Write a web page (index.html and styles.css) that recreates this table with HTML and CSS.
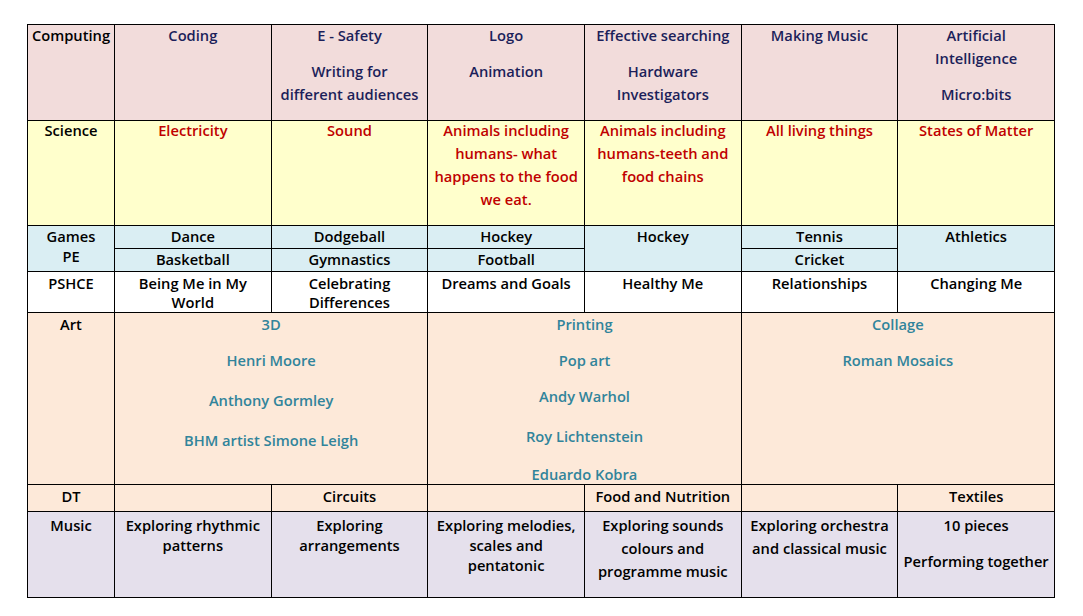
FILE: index.html
```html
<!DOCTYPE html>
<html lang="en">
<head>
<meta charset="utf-8">
<title>Curriculum overview</title>
<link rel="stylesheet" href="styles.css">
</head>
<body>
<table class="plan">
  <colgroup>
    <col class="c-label">
    <col class="c-wide"><col class="c-wide"><col class="c-wide"><col class="c-wide"><col class="c-wide"><col class="c-wide">
  </colgroup>
  <tbody>
    <tr class="r-computing">
      <td class="label"><p>Computing</p></td>
      <td><p>Coding</p></td>
      <td><p>E - Safety</p><p class="gap">Writing for<br>different audiences</p></td>
      <td><p>Logo</p><p class="gap">Animation</p></td>
      <td><p>Effective searching</p><p class="gap">Hardware<br>Investigators</p></td>
      <td><p>Making Music</p></td>
      <td><p>Artificial<br>Intelligence</p><p class="gap">Micro:bits</p></td>
    </tr>
    <tr class="r-science">
      <td class="label"><p>Science</p></td>
      <td><p>Electricity</p></td>
      <td><p>Sound</p></td>
      <td><p>Animals including<br>humans- what<br>happens to the food<br>we eat.</p></td>
      <td><p>Animals including<br>humans-teeth and<br>food chains</p></td>
      <td><p>All living things</p></td>
      <td><p>States of Matter</p></td>
    </tr>
    <tr class="r-games">
      <td class="label" rowspan="2">Games<br>PE</td>
      <td class="split">Dance</td>
      <td class="split">Dodgeball</td>
      <td class="split">Hockey</td>
      <td rowspan="2">Hockey</td>
      <td class="split">Tennis</td>
      <td rowspan="2">Athletics</td>
    </tr>
    <tr class="r-games r-games2">
      <td>Basketball</td>
      <td>Gymnastics</td>
      <td>Football</td>
      <td>Cricket</td>
    </tr>
    <tr class="r-pshce">
      <td class="label">PSHCE</td>
      <td>Being Me in My<br>World</td>
      <td>Celebrating<br>Differences</td>
      <td>Dreams and Goals</td>
      <td>Healthy Me</td>
      <td>Relationships</td>
      <td>Changing Me</td>
    </tr>
    <tr class="r-art">
      <td class="label">Art</td>
      <td colspan="2"><p>3D</p><p class="gap">Henri Moore</p><p class="gap wide">Anthony Gormley</p><p class="gap wide">BHM artist Simone Leigh</p></td>
      <td colspan="2"><p>Printing</p><p class="gap">Pop art</p><p class="gap">Andy Warhol</p><p class="gap wide">Roy Lichtenstein</p><p class="gap wider">Eduardo Kobra</p></td>
      <td colspan="2"><p>Collage</p><p class="gap">Roman Mosaics</p></td>
    </tr>
    <tr class="r-dt">
      <td class="label">DT</td>
      <td></td>
      <td>Circuits</td>
      <td></td>
      <td>Food and Nutrition</td>
      <td></td>
      <td>Textiles</td>
    </tr>
    <tr class="r-music">
      <td class="label">Music</td>
      <td class="tight">Exploring rhythmic<br>patterns</td>
      <td class="tight">Exploring<br>arrangements</td>
      <td class="tight">Exploring melodies,<br>scales and<br>pentatonic</td>
      <td>Exploring sounds<br>colours and<br>programme music</td>
      <td>Exploring orchestra<br>and classical music</td>
      <td><p>10 pieces</p><p class="gap">Performing together</p></td>
    </tr>
  </tbody>
</table>
</body>
</html>
```
FILE: styles.css
```css
html, body {
  margin: 0;
  padding: 0;
  background: #ffffff;
}

body {
  font-family: "Open Sans", "DejaVu Sans", sans-serif;
  font-weight: 600;
  font-size: 14.7px;
  color: #000000;
}

.plan {
  margin: 24px 0 0 27px;
  width: 1028px;
  table-layout: fixed;
  border-collapse: collapse;
}

.c-label { width: 87px; }

.plan td {
  border: 1px solid #000000;
  padding: 0 2px;
  vertical-align: top;
  text-align: center;
  white-space: nowrap;
  line-height: 23px;
}

.plan p {
  margin: 0;
}

.plan p.gap { margin-top: 13px; }

/* Computing */
.r-computing { height: 96px; }
.r-computing td { background: #f2dcdb; color: #1c1f5a; }
.r-computing td.label { color: #000000; }
.r-computing td > p:first-child { margin-top: -1px; }

/* Science */
.r-science { height: 105px; }
.r-science td { background: #ffffcc; color: #c00000; }
.r-science td.label { color: #000000; }
.r-science td > p:first-child { margin-top: -2px; }

/* Games / PE */
.r-games { height: 23px; }
.r-games td { background: #daeef3; line-height: 20px; padding-top: 0; }

/* PSHCE */
.r-pshce { height: 41px; }
.r-pshce td { background: #ffffff; line-height: 19px; padding-top: 2px; }

/* Art */
.r-art { height: 172px; }
.r-art td { background: #fde9d9; color: #31849b; line-height: 18px; padding-top: 2px; }
.r-art td.label { color: #000000; }
.r-art p.gap { margin-top: 18px; }
.r-art p.wide { margin-top: 22px; }
.r-art p.wider { margin-top: 20px; }

/* DT */
.r-dt { height: 27px; }
.r-dt td { background: #fde9d9; line-height: 23px; padding-top: 0; }

/* Music */
.r-music { height: 86px; }
.r-music td { background: #e5e0ec; padding-top: 2px; }
.r-music td.tight { line-height: 20px; padding-top: 3px; }
.r-music td.label { line-height: 20px; padding-top: 3px; }
```
